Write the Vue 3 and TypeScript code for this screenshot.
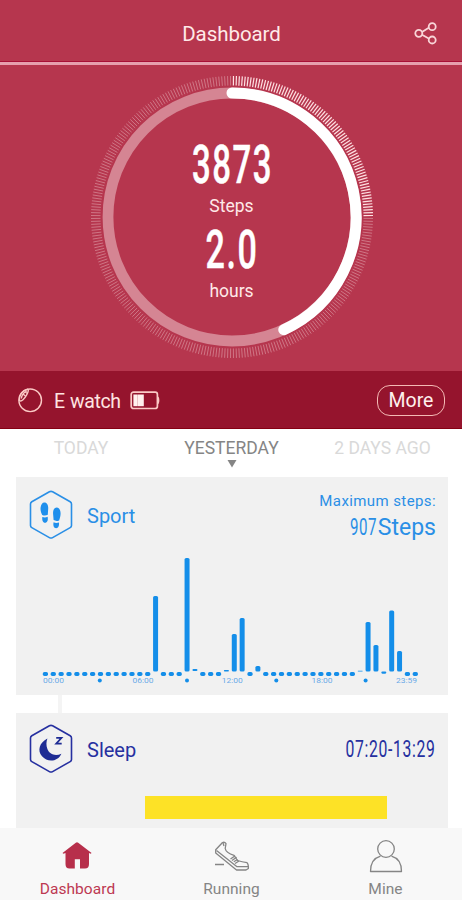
<script setup lang="ts">
interface Slot { height: number; lift: number; width: number }

const tickCount = 300
const ticks = Array.from({ length: tickCount }, (_, i) => {
  const a = ((i + 0.5) / tickCount) * Math.PI * 2
  const sx = Math.sin(a)
  const cy = -Math.cos(a)
  return { x1: 142 + sx * 131.5, y1: 142 + cy * 131.5, x2: 142 + sx * 141, y2: 142 + cy * 141, lit: i < tickCount / 4 }
})

// Half-hour slots; anything not listed is an idle dot below the baseline.
const active: Record<number, Slot> = {
  14: { height: 75.5, lift: 0, width: 5 },
  18: { height: 113.5, lift: 0, width: 5 },
  19: { height: 2, lift: 0.5, width: 5 },
  23: { height: 1.4, lift: 0, width: 5 },
  24: { height: 37.5, lift: 0, width: 5 },
  25: { height: 53.5, lift: 0, width: 5 },
  27: { height: 5.5, lift: 0, width: 5 },
  40: { height: 0.8, lift: 0, width: 5 },
  41: { height: 49.5, lift: 0, width: 5 },
  42: { height: 26.5, lift: 0, width: 5 },
  43: { height: 2.2, lift: -2.2, width: 5 },
  44: { height: 61, lift: 0, width: 5 },
  45: { height: 20.5, lift: 0, width: 5 },
}
const bars = Array.from({ length: 48 }, (_, i) => {
  const s = active[i] ?? { height: 4, lift: -4.4, width: 5.2 }
  return { x: 29.4 + i * 7.87 - s.width / 2, y: 121.5 - s.height - s.lift, w: s.width, h: s.height, r: Math.min(1.6, s.height / 2) }
})
const hours = [
  { x: 37.4, label: '00:00' },
  { x: 127, label: '06:00' },
  { x: 216.3, label: '12:00' },
  { x: 306, label: '18:00' },
  { x: 390.5, label: '23:59' },
]
const marks = [83.8, 171, 260.3, 349.6]
</script>

<template>
  <div class="screen">
    <header class="header">
      <h1>Dashboard</h1>
      <svg class="share" width="26" height="26" viewBox="0 0 26 26">
        <path d="M9 12 16.2 7.5M9 14.7 16.2 18.8" />
        <circle cx="5.8" cy="13.3" r="3.5" /><circle cx="19.2" cy="6.7" r="3.5" /><circle cx="19.2" cy="20" r="3.5" />
      </svg>
    </header>

    <section class="hero">
      <svg class="ring" width="284" height="284" viewBox="0 0 284 284">
        <line v-for="(t, i) in ticks" :key="i" :x1="t.x1" :y1="t.y1" :x2="t.x2" :y2="t.y2" :class="['tick', { lit: t.lit }]" />
        <circle class="track" cx="142" cy="142" r="124" />
        <path class="progress" d="M142 18A124 124 0 0 1 193.8 254.7" />
        <text class="figure" x="102" y="107.5" textLength="81" lengthAdjust="spacingAndGlyphs">3873</text>
        <text class="unit" x="141.5" y="137" text-anchor="middle">Steps</text>
        <text class="figure" x="115.5" y="192.5" textLength="53" lengthAdjust="spacingAndGlyphs">2.0</text>
        <text class="unit" x="141.5" y="222" text-anchor="middle">hours</text>
      </svg>
    </section>

    <section class="device">
      <svg class="watch" width="26" height="26" viewBox="0 0 26 26">
        <circle cx="13.2" cy="13.3" r="11.3" />
        <path d="M2.4 13.5C2 8 5.5 3.2 10.4 2.2 12 2.3 11.3 5 9.8 7.7 7.5 11.8 4.5 15.3 2.4 13.5Z" /><path d="M4.3 11.5C5 8 7 5.2 9.7 4.2M6 7l2.5 2M8 4.7l2 1.5" />
      </svg>
      <span class="name">E watch</span>
      <svg class="battery" width="31" height="19" viewBox="0 0 31 19">
        <rect class="shell" x="1.2" y="1.2" width="26.2" height="16.3" rx="2.3" />
        <rect class="cell" x="3.4" y="3.5" width="4.4" height="11.7" /><rect class="cell" x="8" y="3.5" width="5.8" height="11.7" />
        <path class="tip" d="M28 5.5C29.8 6 29.8 12.7 28 13.2Z" />
      </svg>
      <button class="more">More</button>
    </section>

    <nav class="days">
      <span>TODAY</span>
      <span class="current">YESTERDAY<svg width="10" height="8" viewBox="0 0 10 8"><path d="M.5 0h9L5 7.5Z" /></svg></span>
      <span>2 DAYS AGO</span>
    </nav>

    <section class="card sport">
      <div class="top">
        <svg width="44" height="50" viewBox="0 0 44 50">
          <path class="hex" d="M20.4 1.8Q22 .9 23.6 1.8L41.2 11.8Q42.5 12.6 42.5 14V35.5Q42.5 36.9 41.2 37.6L23.6 47.6Q22 48.5 20.4 47.6L2.8 37.6Q1.5 36.9 1.5 35.5V14Q1.5 12.6 2.8 11.8Z" />
          <path class="solid" d="M15.4 12.4c2.8 0 4 2.9 3.8 6.2l-.4 6.1q-2.8 1.5-5.6.2c-1.1-2.4-2-4.8-1.6-7.5.4-2.9 1.6-5 3.8-5Z" />
          <path class="solid" d="M13.3 27q2.9 1 5.3-.2c.8 3.4-.4 6-2.5 6-2.4 0-3.1-2.6-2.8-5.8Z" />
          <path class="solid" d="M27.8 17.5c2.5.1 3.8 2.8 3.8 6 0 2.6-.7 4.6-1.5 6.9q-2.9 1.2-5.5-.3l-.5-6c-.3-3.5.8-6.6 3.7-6.6Z" />
          <path class="solid" d="M24.6 32.3q2.5 1.2 5.4.2c.3 3.3-.5 5.7-2.9 5.7-2.2 0-3.3-2.6-2.5-5.9Z" />
        </svg>
        <h2>Sport</h2>
        <div class="peak">
          <span class="caption">Maximum steps:</span>
          <span class="total"><span class="count">907</span>Steps</span>
        </div>
      </div>
      <svg class="chart" width="432" height="145" viewBox="0 0 432 145">
        <rect v-for="(b, i) in bars" :key="i" :x="b.x" :y="b.y" :width="b.w" :height="b.h" :rx="b.r" />
        <circle v-for="m in marks" :key="m" :cx="m" cy="130.5" r="2" />
        <text v-for="h in hours" :key="h.label" :x="h.x - 10.5" y="133.3" textLength="21" lengthAdjust="spacingAndGlyphs">{{ h.label }}</text>
      </svg>
    </section>

    <div class="link"></div>

    <section class="card sleep">
      <div class="top">
        <svg width="44" height="50" viewBox="0 0 44 50">
          <path class="hex" d="M20.4 1.8Q22 .9 23.6 1.8L41.2 11.8Q42.5 12.6 42.5 14V35.5Q42.5 36.9 41.2 37.6L23.6 47.6Q22 48.5 20.4 47.6L2.8 37.6Q1.5 36.9 1.5 35.5V14Q1.5 12.6 2.8 11.8Z" />
          <path class="solid" d="M18.4 14.5C10.5 18.5 8 26.5 13 32.3c5.5 6.4 16 5.5 19.4-2.6C26 32.7 20.3 30 18.4 25c-1.4-3.7-1.2-7.3 0-10.5Z" />
          <path class="zed" d="M27.2 13.9h5.3l-5.3 5.7h5.5" />
        </svg>
        <h2>Sleep</h2>
        <span class="range">07:20-13:29</span>
      </div>
      <div class="phase"></div>
    </section>

    <footer class="tabs">
      <a class="active">
        <svg width="36" height="36" viewBox="0 0 36 36"><path class="house" d="M16.8 4.800Q18 3.700 19.200 4.800L32.600 15 31.500 15.700 30 15V26Q30 30.500 26 30.500H21V21.300H15.800V30.500H10.500Q6.500 30.500 6.500 26V15L4.500 15.700 3.500 15Z" /></svg>
        <span>Dashboard</span>
      </a>
      <a>
        <svg class="line" width="36" height="36" viewBox="0 0 36 36">
          <path d="M1 26.5h9" class="thick" />
          <path d="M1.7 11.7 8.5 4.5Q10.8 3.7 12 5.7L11.2 10.5Q12 15 20 17.3L23.5 22.5Q28 24 33 24.7Q34.5 26 34.4 30.5L32 32H22.5L1.7 15Z" />
          <path d="M2.500 12.500 23 28.700H34M9 5l1 3M16.500 21l4.700-3.300M18 22.500l4.600-3.200M19.800 23.800l3.700-2.300M21 25.500l4-2.500" />
        </svg>
        <span>Running</span>
      </a>
      <a>
        <svg class="line" width="36" height="36" viewBox="0 0 36 36">
          <circle cx="18" cy="11" r="8.3" /><path d="M12.5 18.2C6 20 2.5 25 2.5 33.5H33.5C33.5 25 30 20 23.5 18.2" />
        </svg>
        <span>Mine</span>
      </a>
    </footer>
  </div>
</template>

<style>
body { margin: 0; background: #fff; }
</style>

<style scoped>
.screen { width: 462px; height: 900px; overflow: hidden; display: flex; flex-direction: column; background: #fff; font-family: Roboto, "Liberation Sans", sans-serif; }
.screen > * { flex-shrink: 0; }
svg { display: block; }
h1, h2 { margin: 0; font-weight: 400; }
.header { box-sizing: border-box; height: 65px; display: grid; grid-template-columns: 1fr auto 1fr; align-items: center; padding: 5px 23px 0 24px; background: #b6364e; border-bottom: 3px solid #e69fae; box-shadow: inset 0 -1px #a80f36; }
.header h1 { grid-column: 2; font-size: 20.5px; color: #ffe9e8; letter-spacing: -.05px; }
.share { justify-self: end; margin-top: -2px; fill: none; stroke: #f9d5d8; stroke-width: 1.8; }
.hero { height: 306px; display: flex; justify-content: center; align-items: flex-start; padding: 10px 0 0 1px; box-sizing: border-box; background: #b6364e; }
.tick { stroke: #d17d8b; stroke-width: .9; }
.tick.lit { stroke: #ffe0e2; stroke-width: 1.2; }
.track { fill: none; stroke: #d58593; stroke-width: 10.8; }
.progress { fill: none; stroke: #fff; stroke-width: 11; stroke-linecap: round; }
.figure { font-size: 53px; font-weight: 500; letter-spacing: 2.5px; fill: #fff; stroke: #fff; stroke-width: .5; }
.unit { font-size: 17.5px; fill: #ffe9e8; }
.device { box-sizing: border-box; height: 58px; display: flex; align-items: center; padding: 1px 17px 0; background: #95142d; border-bottom: 1px solid #850013; }
.watch { margin-top: -1px; fill: none; stroke: #fbc9c5; stroke-width: 1.4; }
.name { margin: 2px 0 0 11px; width: 66px; font-size: 19.5px; letter-spacing: -.4px; word-spacing: 1px; color: #ffe5e1; white-space: nowrap; }
.battery { margin-left: 10px; }
.shell { fill: none; stroke: #fbc9c5; stroke-width: 1.7; }
.cell { fill: #fff0ed; }
.tip { fill: #fbc9c5; }
.more { box-sizing: border-box; width: 68px; height: 31px; margin-left: auto; padding: 1px 0 0; border: 1.5px solid #f4b9b4; border-radius: 13px; background: none; color: #fff0ed; font: 400 19.5px Roboto, sans-serif; }
.days { box-sizing: border-box; height: 48px; display: grid; grid-template-columns: 162px 139px 163px; padding-top: 9px; font-size: 17.5px; line-height: 21px; color: #d9d9d9; text-align: center; }
.days .current { display: flex; flex-direction: column; align-items: center; color: #858585; }
.current svg { margin-top: 1px; fill: #858585; }
.card { box-sizing: border-box; margin: 0 14px 0 16px; background: #f1f1f1; }
.sport { height: 218px; color: #2a8fe6; }
.sleep { height: 115px; color: #2630a0; }
.top { box-sizing: border-box; height: 73px; display: flex; align-items: center; padding: 3px 12px 0 13px; }
.sleep .top { padding-top: 0; height: 71px; }
.hex { fill: none; stroke: currentColor; stroke-width: 1.6; stroke-linejoin: round; }
.solid { fill: #1f8fec; }
.sleep .solid { fill: #1e2c94; }
.zed { fill: none; stroke: #1e2c94; stroke-width: 1.7; }
.top h2 { margin: 2px 0 0 14px; font-size: 20px; }
.sleep .top h2 { margin-top: 2px; }
.peak { margin: 4px 0 0 auto; display: flex; flex-direction: column; align-items: flex-end; }
.caption { font-size: 15px; line-height: 20px; letter-spacing: .4px; }
.total { display: flex; height: 32px; align-items: center; font-size: 23px; }
.count { font-size: 24px; letter-spacing: .8px; transform: scaleX(.63); transform-origin: left; margin-right: -15.3px; }
.chart rect, .chart circle { fill: #148ee9; }
.chart text { font-size: 7px; fill: #6aaae8; }
.link { width: 4px; height: 18px; margin-left: 58px; background: #f4f4f4; }
.range { margin-left: auto; font-size: 23.5px; letter-spacing: 1px; white-space: nowrap; transform: scaleX(.67); transform-origin: right; }
.phase { width: 242px; height: 23px; margin: 12px 0 0 128.5px; background: #fde226; }
.tabs { height: 72px; display: grid; grid-template-columns: repeat(3, 1fr); background: #f8f8f8; color: #858585; }
.tabs a { display: flex; flex-direction: column; align-items: center; padding-top: 10px; font-size: 15.5px; line-height: 18px; }
.tabs a:not(:first-child) svg { margin-left: 1px; }
.tabs span { margin: 6px 0 0 1px; letter-spacing: .05px; }
.tabs .active { color: #bd3852; }
.house { fill: #b72f4b; }
.line { fill: none; stroke: #858585; stroke-width: 1.3; stroke-linejoin: round; }
.thick { stroke-width: 1.5; }
</style>
